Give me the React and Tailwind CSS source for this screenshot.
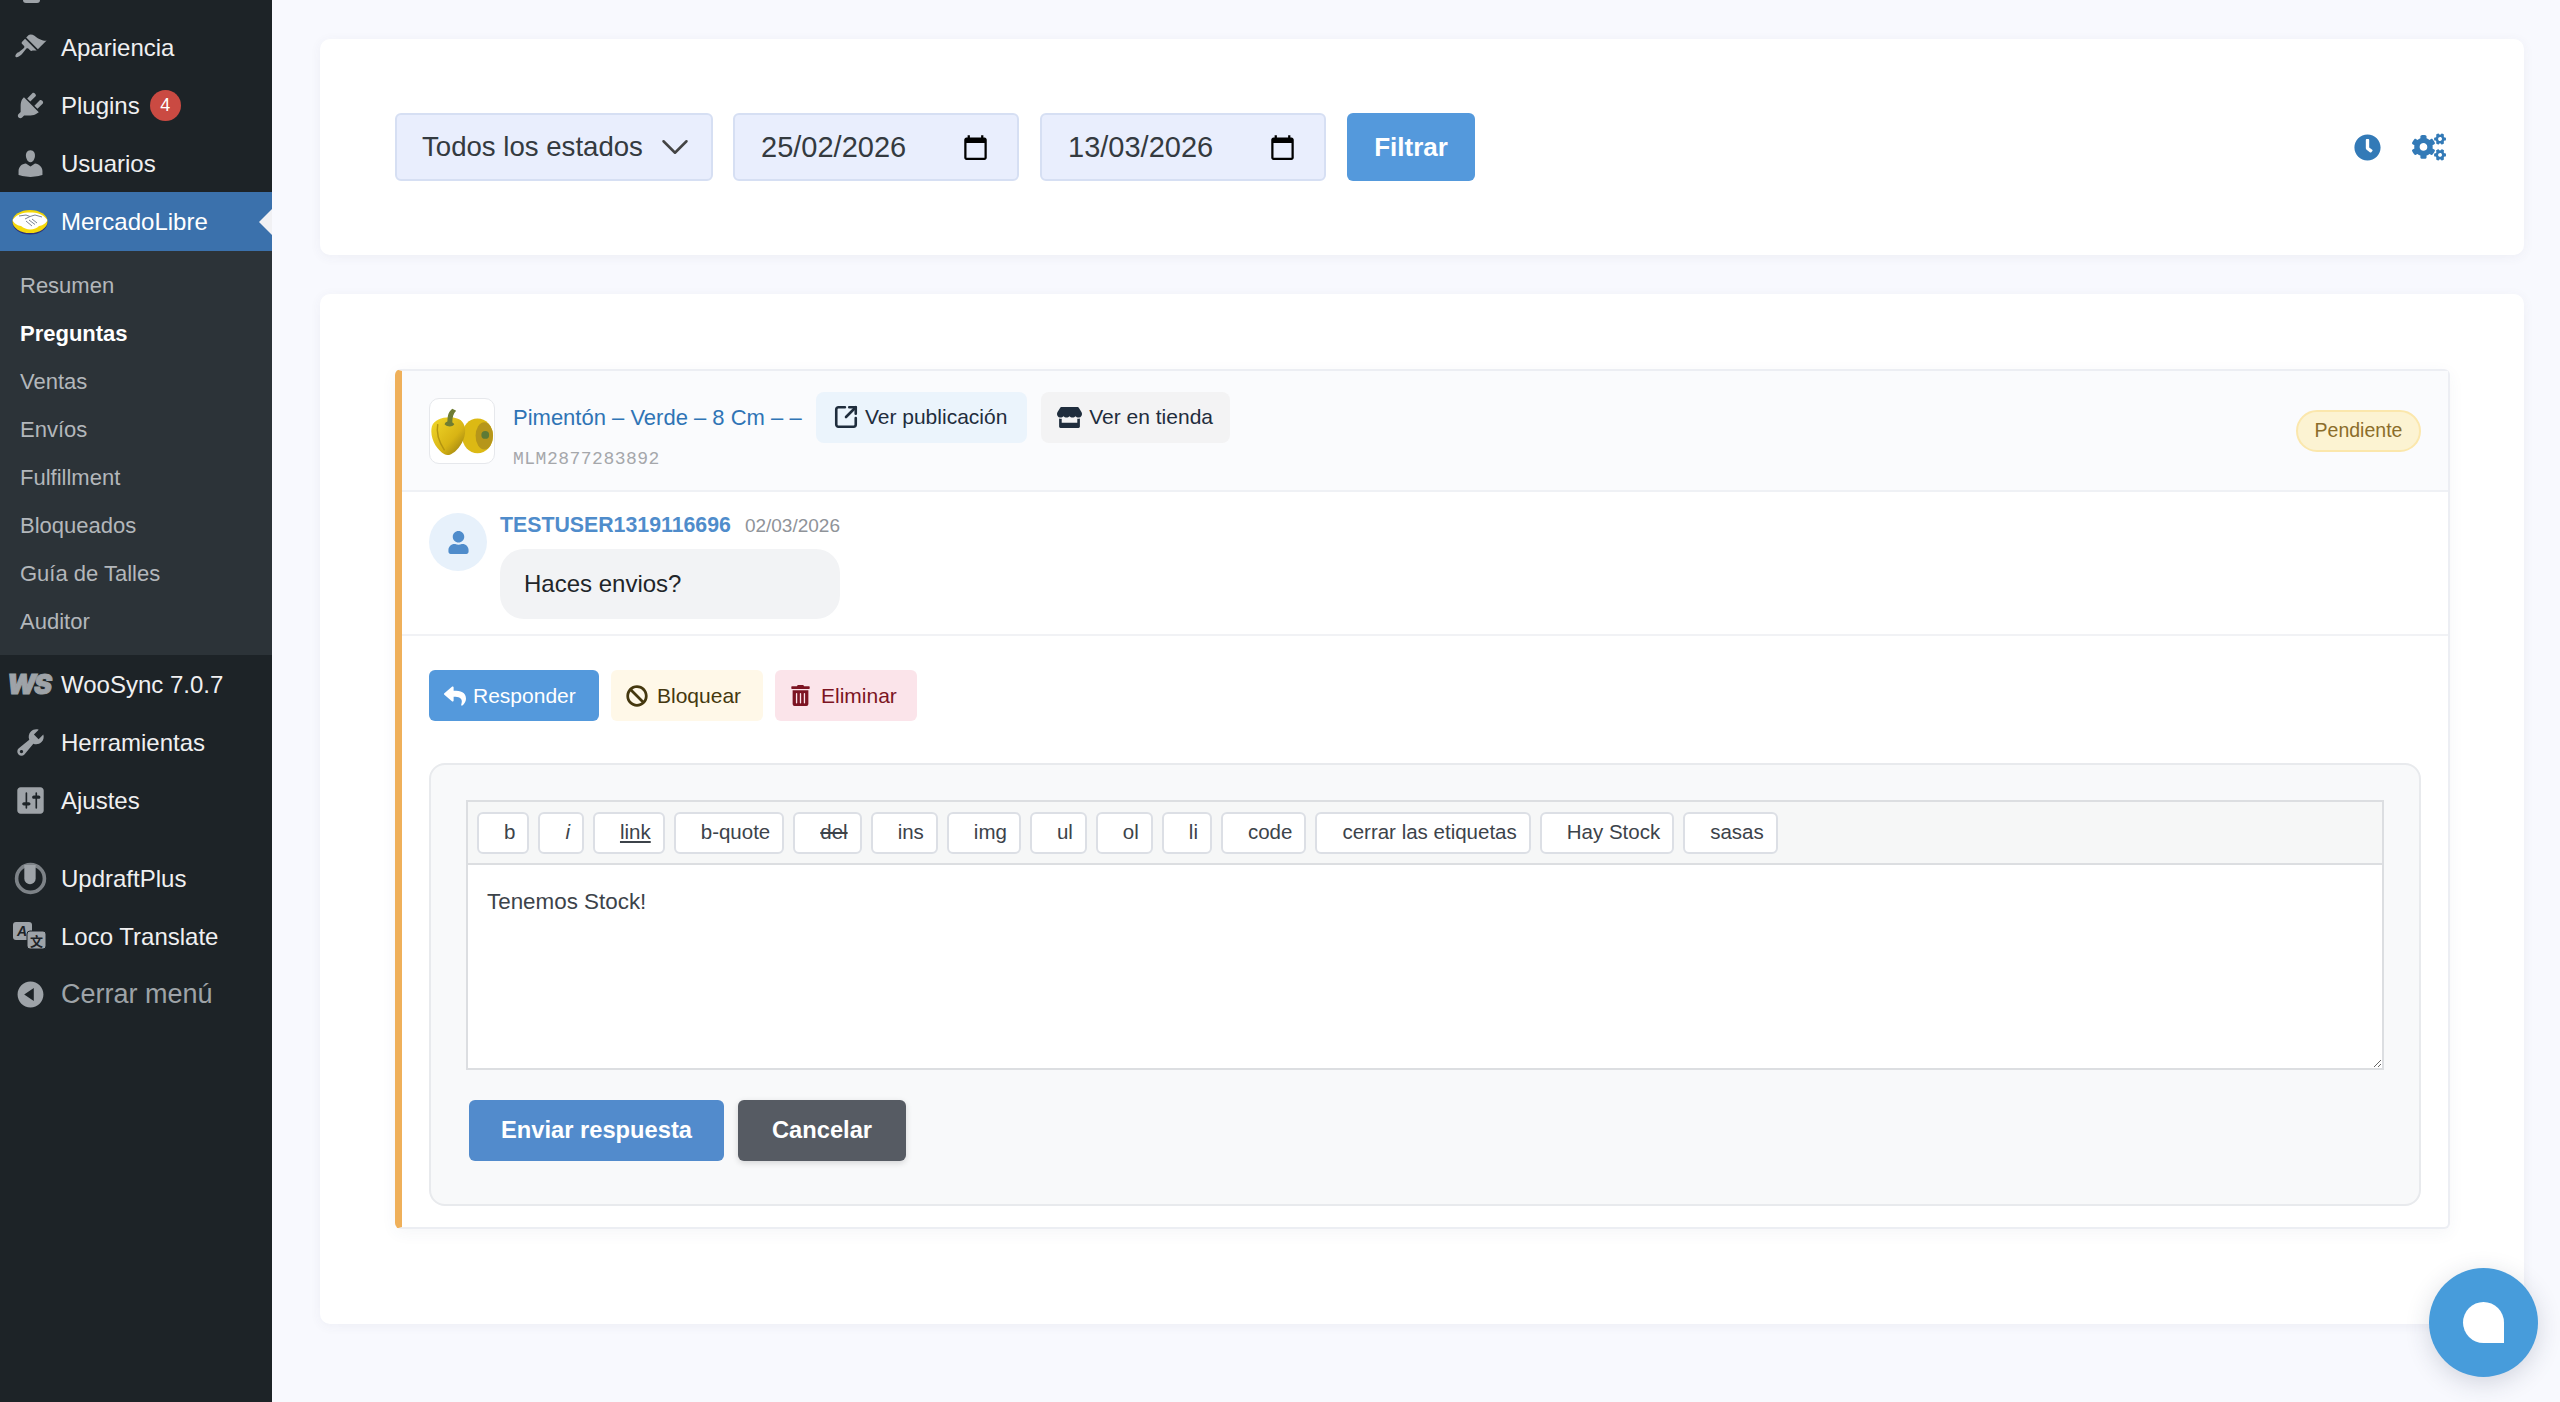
import { FaReply, FaBan, FaTrashAlt, FaUser, FaStore, FaClock, FaCogs } from "react-icons/fa";
import { MdCalendarToday } from "react-icons/md";
import { ChevronDown, SquareArrowOutUpRight } from "lucide-react";

const Dash = ({ d }) => (
  <svg viewBox="0 0 20 20" className="w-[33px] h-[33px] fill-[#9ea3a8]">
    <path d={d} />
  </svg>
);

const MeliLogo = () => (
  <svg viewBox="0 0 36 26" className="w-[36px] h-[26px]">
    <ellipse cx="18" cy="13.5" rx="17.5" ry="12" fill="#2d3277" />
    <ellipse cx="18" cy="12.5" rx="17.5" ry="11.5" fill="#f5d90a" />
    <path d="M0.6 11 C5 5 11 3.5 18 3.5 C25 3.5 31 5 35.4 11 C34 15 30 16.5 27 17 C23 21.5 14 21.5 9 17 C6 16.5 2 15 0.6 11 Z" fill="#fff" />
    <path d="M7 7 L14 6 L18 7.5 L23 6 L30 8 M13 10 L18 7.5 M14 12 L20 17 M17 11 L23 15.5 M20 10 L25 14" stroke="#7d8496" strokeWidth="1" fill="none" />
  </svg>
);

const WsLogo = () => (
  <span className="block font-['Inter'] text-[#9ea3a8] text-[27px] leading-none font-black italic tracking-[-2px] [-webkit-text-stroke:1px_#9ea3a8] -ml-[3px]">WS</span>
);

const UpdraftIcon = () => (
  <svg viewBox="0 0 32 32" className="w-[33px] h-[33px]">
    <circle cx="16" cy="16" r="13.5" fill="none" stroke="#9ea3a8" strokeWidth="3.5" opacity="0.75" />
    <path d="M10 3 H21 V16 A5.5 5.5 0 0 1 10 16 Z" fill="#9ea3a8" />
  </svg>
);

const LocoIcon = () => (
  <svg viewBox="0 0 34 28" className="w-[34px] h-[28px]">
    <rect x="0" y="0" width="19" height="18" rx="3" fill="#9ea3a8" />
    <text x="4" y="14" fontSize="14" fontWeight="700" fontStyle="italic" fill="#1d2327" fontFamily="Liberation Sans">A</text>
    <rect x="14" y="9" width="19" height="18" rx="3" fill="#9ea3a8" stroke="#1d2327" strokeWidth="1" />
    <text x="17" y="24" fontSize="13" fontWeight="700" fill="#1d2327" fontFamily="Noto Sans CJK SC">文</text>
  </svg>
);

const Pepper = () => (
  <svg viewBox="0 0 66 66" className="w-full h-full">
    <defs>
      <linearGradient id="pep" x1="0" y1="0" x2="1" y2="1">
        <stop offset="0" stopColor="#f2d82a" />
        <stop offset="0.6" stopColor="#d8b414" />
        <stop offset="1" stopColor="#8c7410" />
      </linearGradient>
    </defs>
    <ellipse cx="49" cy="38" rx="16" ry="18" fill="#dcb914" />
    <ellipse cx="56" cy="38" rx="9" ry="14" fill="#b6961a" />
    <circle cx="57" cy="37" r="4" fill="#5d7a36" />
    <path d="M2 28 C5 20 18 17 28 20 C38 23 38 36 33 45 C28 54 20 60 15 57 C7 53 -1 40 2 28 Z" fill="url(#pep)" />
    <path d="M8 26 C6 36 11 47 15 53" stroke="#b49510" strokeWidth="1.5" fill="none" />
    <path d="M15 26 C17 21 23 23 25 26 C23 29 18 29 15 26 Z" fill="#6f7d33" />
    <path d="M18 24 C18 17 19 13 23 10 L27 12 C24 15 23 19 23 24 Z" fill="#6f7d33" />
  </svg>
);

const menuTop = [
  { label: "Apariencia", icon: <Dash d="M14.48 11.06L7.41 3.99l1.5-1.5c.5-.56 2.3-.47 3.51.32 1.21.8 1.43 1.28 2.91 2.1 1.18.64 2.45 1.26 4.45.85zm-.71.71L6.7 4.7 4.93 6.47c-.39.39-.39 1.02 0 1.41l1.06 1.06c.39.39.39 1.03 0 1.42-.6.6-1.43 1.11-2.21 1.69-.35.26-.7.53-1.01.84C1.43 13.23.43 15.08 1.05 15.7c.62.62 2.47-.38 3.82-1.77.31-.31.58-.66.84-1.01.58-.78 1.09-1.61 1.69-2.21.39-.39 1.02-.39 1.41 0l1.06 1.06c.39.39 1.02.39 1.41 0z" /> },
  { label: "Plugins", badge: "4", icon: <Dash d="M13.11 4.36L9.87 7.6 8 5.73l3.24-3.24c.35-.34 1.05-.2 1.56.32.52.51.66 1.21.31 1.55zm-8 1.77l.91-1.12 9.01 9.01-1.19.84c-.71.71-2.63 1.16-3.82 1.16H6.14L4.9 17.26c-.59.59-1.54.59-2.12 0-.59-.58-.59-1.53 0-2.12l1.24-1.24v-3.88c0-1.13.4-3.19 1.09-3.89zm7.26 3.97l3.24-3.24c.34-.35 1.04-.21 1.55.31.52.51.66 1.21.31 1.55l-3.24 3.25z" /> },
  { label: "Usuarios", icon: <Dash d="M10 9.25c-2.27 0-2.73-3.44-2.73-3.44C7 4.02 7.82 2 9.97 2c2.16 0 2.98 2.02 2.71 3.81 0 0-.41 3.44-2.68 3.44zm0 2.57L12.72 10c2.39 0 4.52 2.33 4.52 4.53v2.49s-3.65 1.13-7.24 1.13c-3.65 0-7.24-1.13-7.24-1.13v-2.49c0-2.25 1.94-4.48 4.47-4.48z" /> },
];

const subMenu = ["Resumen", "Preguntas", "Ventas", "Envíos", "Fulfillment", "Bloqueados", "Guía de Talles", "Auditor"];

const menuMid = [
  { label: "WooSync 7.0.7", icon: <WsLogo /> },
  { label: "Herramientas", icon: <Dash d="M16.68 9.77c-1.34 1.34-3.3 1.67-4.95.99l-5.41 6.52c-.99.99-2.59.99-3.58 0s-.99-2.59 0-3.57l6.52-5.42c-.68-1.65-.35-3.61.99-4.95 1.28-1.28 3.12-1.62 4.72-1.06l-2.89 2.89 2.82 2.82 2.86-2.87c.53 1.58.18 3.39-1.08 4.65zM3.81 16.21c.4.39 1.04.39 1.43 0 .4-.4.4-1.04 0-1.43-.39-.4-1.03-.4-1.43 0-.39.39-.39 1.03 0 1.43z" /> },
  { label: "Ajustes", icon: <Dash d="M18 16V4c0-1.1-.9-2-2-2H4c-1.1 0-2 .9-2 2v12c0 1.1.9 2 2 2h12c1.1 0 2-.9 2-2zM8 11h1c.55 0 1 .45 1 1s-.45 1-1 1H8v1.5c0 .28-.22.5-.5.5s-.5-.22-.5-.5V13H6c-.55 0-1-.45-1-1s.45-1 1-1h1V5.5c0-.28.22-.5.5-.5s.5.22.5.5V11zm5-2h-1c-.55 0-1-.45-1-1s.45-1 1-1h1V5.5c0-.28.22-.5.5-.5s.5.22.5.5V7h1c.55 0 1 .45 1 1s-.45 1-1 1h-1v5.5c0 .28-.22.5-.5.5s-.5-.22-.5-.5V9z" /> },
];

const menuBottom = [
  { label: "UpdraftPlus", icon: <UpdraftIcon /> },
  { label: "Loco Translate", icon: <LocoIcon /> },
  { label: "Cerrar menú", dim: true, icon: <Dash d="M10 2.16c4.33 0 7.84 3.51 7.84 7.84s-3.51 7.84-7.84 7.84S2.16 14.33 2.16 10 5.71 2.16 10 2.16zm2 11.72V6.12L6.18 9.97z" /> },
];

const tags = [
  { t: "b" },
  { t: "i", c: "italic" },
  { t: "link", c: "underline" },
  { t: "b-quote" },
  { t: "del", c: "line-through" },
  { t: "ins" },
  { t: "img" },
  { t: "ul" },
  { t: "ol" },
  { t: "li" },
  { t: "code" },
  { t: "cerrar las etiquetas" },
  { t: "Hay Stock" },
  { t: "sasas" },
];

const MenuRow = ({ item }) => (
  <div className={`h-[58px] flex items-center ${item.dim ? "text-[27px] text-[#9ea3a8]" : "text-[24px] text-[#f0f0f1]"}`}>
    <div className="w-[60px] shrink-0 flex items-center justify-center">{item.icon}</div>
    <span className="ml-[1px] pt-[1px]">{item.label}</span>
    {item.badge && (
      <span className="ml-[10px] w-[31px] h-[31px] rounded-full bg-[#ca4a42] text-white text-[18px] flex items-center justify-center">
        {item.badge}
      </span>
    )}
  </div>
);

const Sidebar = () => (
  <aside className="w-[272px] shrink-0 bg-[#1d2327] overflow-hidden">
    <div className="h-[18px] pl-[23px]">
      <div className="w-[17px] h-[3px] rounded-b-full bg-[#9ea3a8]"></div>
    </div>
    {menuTop.map((item) => (
      <MenuRow key={item.label} item={item} />
    ))}
    <div className="relative h-[59px] bg-[#3b71ac] flex items-center text-[24px] text-white">
      <div className="w-[60px] shrink-0 flex items-center justify-center">
        <MeliLogo />
      </div>
      <span className="ml-[1px]">MercadoLibre</span>
      <div className="absolute right-0 top-[17px] w-0 h-0 border-y-[13px] border-y-transparent border-r-[13px] border-r-[#f1f1f4]"></div>
    </div>
    <div className="bg-[#2c3338] py-[10px]">
      {subMenu.map((s) => (
        <div
          key={s}
          className={`h-[48px] flex items-center pl-[20px] text-[22px] ${s === "Preguntas" ? "font-bold text-white" : "text-[#b3b7bb]"}`}
        >
          {s}
        </div>
      ))}
    </div>
    {menuMid.map((item) => (
      <MenuRow key={item.label} item={item} />
    ))}
    <div className="h-[20px]"></div>
    {menuBottom.map((item) => (
      <MenuRow key={item.label} item={item} />
    ))}
  </aside>
);

const DateField = ({ value }) => (
  <div className="w-[286px] h-[68px] bg-[#e9eefd] border-2 border-[#d6dff3] rounded-[6px] flex items-center justify-between pl-[26px] pr-[28px] text-[29px] text-[#343a40]">
    <span className="pt-[1px]">{value}</span>
    <MdCalendarToday className="text-[27px] text-black" />
  </div>
);

const FilterCard = () => (
  <div className="h-[216px] bg-white rounded-[10px] shadow-[0_2px_12px_rgba(60,70,110,0.06)] flex items-center pl-[75px] pr-[78px]">
    <div className="w-[318px] h-[68px] bg-[#e9eefd] border-2 border-[#d6dff3] rounded-[6px] flex items-center justify-between pl-[25px] pr-[13px] text-[27.6px] text-[#343a40]">
      <span>Todos los estados</span>
      <ChevronDown className="w-[46px] h-[46px] text-[#444]" strokeWidth={1.3} />
    </div>
    <div className="ml-[20px] flex gap-[21px]">
      <DateField value="25/02/2026" />
      <DateField value="13/03/2026" />
    </div>
    <button className="ml-[21px] w-[128px] h-[68px] bg-[#5499dc] rounded-[6px] text-white text-[26px] font-bold">Filtrar</button>
    <div className="ml-auto flex items-center gap-[31px] text-[#337ab7]">
      <FaClock className="text-[27px]" />
      <FaCogs className="text-[34px]" />
    </div>
  </div>
);

const QuestionHeader = () => (
  <div className="h-[121px] bg-[#fafbfd] border-b-2 border-[#eff1f5] flex items-center pl-[27px] pr-[27px]">
    <div className="w-[66px] h-[66px] bg-white border border-[#e6e8ec] rounded-[10px] overflow-hidden shrink-0">
      <Pepper />
    </div>
    <div className="ml-[18px]">
      <div className="flex items-center gap-[14px]">
        <a className="text-[22px] text-[#2f74b5]">Pimentón – Verde – 8 Cm – –</a>
        <span className="h-[51px] w-[211px] bg-[#ebf4fc] rounded-[8px] flex items-center justify-center gap-[6px] text-[21px] text-[#1f2d3d]">
          <SquareArrowOutUpRight className="w-[26px] h-[26px] -ml-[2px]" strokeWidth={2.4} />
          Ver publicación
        </span>
        <span className="h-[51px] w-[189px] bg-[#f3f3f4] rounded-[8px] flex items-center justify-center gap-[7px] text-[21px] text-[#1f2d3d]">
          <FaStore className="text-[25px]" />
          Ver en tienda
        </span>
      </div>
      <div className="mt-[5px] font-['Liberation_Mono'] text-[18px] leading-[22px] text-[#a5a7ab] tracking-[0.5px]">MLM2877283892</div>
    </div>
    <span className="ml-auto h-[42px] w-[125px] rounded-full bg-[#fcf3d2] border-2 border-[#fbe7ac] text-[#8b6d2a] text-[19.5px] flex items-center justify-center">
      Pendiente
    </span>
  </div>
);

const QuestionBody = () => (
  <div className="flex pl-[27px] pt-[21px] pb-[15px] border-b-2 border-[#f1f2f5] gap-[13px]">
    <div className="w-[58px] h-[58px] rounded-full bg-[#e7f1fb] flex items-center justify-center text-[#4f8ccb] shrink-0">
      <FaUser className="text-[23px]" />
    </div>
    <div>
      <div className="flex items-center gap-[14px] h-[26px]">
        <span className="text-[21.3px] font-bold text-[#4f8ccb]">TESTUSER1319116696</span>
        <span className="text-[19px] text-[#8f9399]">02/03/2026</span>
      </div>
      <div className="mt-[10px] w-[340px] h-[70px] rounded-[24px] bg-[#f2f3f5] flex items-center pl-[24px] text-[24px] text-[#212529]">
        Haces envios?
      </div>
    </div>
  </div>
);

const ReplyForm = () => (
  <div className="mt-[42px] ml-[27px] mr-[27px] bg-[#f8f9fa] border-2 border-[#e8eaed] rounded-[16px] px-[35px] pt-[35px] pb-[43px]">
    <div className="border-2 border-b-0 border-[#dcdee1] bg-[#f6f7f7] h-[63px] flex items-center gap-[9px] pl-[9px]">
      {tags.map((b) => (
        <span
          key={b.t}
          className={`h-[42px] pl-[25px] pr-[12px] bg-white border-2 border-[#dcdfe5] rounded-[6px] flex items-center text-[20.5px] text-[#3c434a] ${b.c || ""}`}
        >
          {b.t}
        </span>
      ))}
    </div>
    <textarea
      className="block w-full h-[207px] bg-white border-2 border-[#dcdee1] px-[19px] py-[24px] text-[22.4px] leading-[26px] text-[#3c434a] outline-none resize-y"
      defaultValue="Tenemos Stock!"
    />
    <div className="mt-[30px] ml-[3px] flex gap-[14px]">
      <button className="w-[255px] h-[61px] bg-[#528bcc] rounded-[6px] text-white text-[23.7px] font-bold">Enviar respuesta</button>
      <button className="w-[168px] h-[61px] bg-[#565b63] rounded-[6px] text-white text-[23.7px] font-bold shadow-[0_2px_6px_rgba(0,0,0,0.15)]">Cancelar</button>
    </div>
  </div>
);

const QuestionCard = () => (
  <div className="bg-white border-2 border-[#eceef3] border-l-[7px] border-l-[#efb05a] rounded-[6px] shadow-[0_4px_16px_rgba(60,70,110,0.05)] pb-[21px]">
    <QuestionHeader />
    <QuestionBody />
    <div className="mt-[34px] ml-[27px] flex gap-[12px] text-[21px]">
      <span className="w-[170px] h-[51px] bg-[#5499dc] rounded-[6px] text-white flex items-center pl-[15px] gap-[7px]">
        <FaReply className="text-[22px]" />
        Responder
      </span>
      <span className="w-[152px] h-[51px] bg-[#fff8e8] rounded-[6px] text-[#45380f] flex items-center pl-[15px] gap-[9px]">
        <FaBan className="text-[22px]" />
        Bloquear
      </span>
      <span className="w-[142px] h-[51px] bg-[#fbe4ea] rounded-[6px] text-[#7c1423] flex items-center pl-[15px] gap-[10px]">
        <FaTrashAlt className="text-[21px]" />
        Eliminar
      </span>
    </div>
    <ReplyForm />
  </div>
);

const App = () => {
  return (
    <div className="relative h-[1402px] overflow-hidden flex bg-[#f8f9fe] font-['Liberation_Sans',sans-serif]">
      <Sidebar />
      <main className="flex-1 min-w-0 pl-[48px] pr-[36px] pt-[39px]">
        <FilterCard />
        <div className="mt-[39px] h-[1030px] bg-white rounded-[10px] shadow-[0_2px_12px_rgba(60,70,110,0.06)] pt-[75px] pl-[75px] pr-[74px]">
          <QuestionCard />
        </div>
      </main>
      <button className="absolute left-[2429px] top-[1268px] w-[109px] h-[109px] rounded-full bg-[#479cdb] shadow-[0_6px_24px_rgba(40,50,80,0.18)] flex items-center justify-center">
        <span className="block w-[41px] h-[41px] bg-white rounded-t-full rounded-bl-full"></span>
      </button>
    </div>
  );
};

export default App;
